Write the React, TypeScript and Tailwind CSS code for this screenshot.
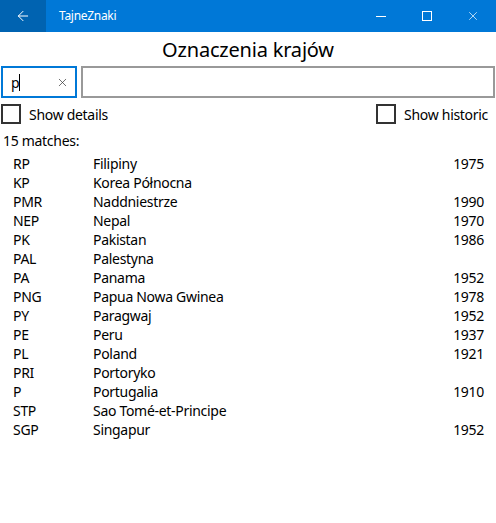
import { ArrowLeft, X } from "lucide-react";

const rows: [string, string, string][] = [
  ["RP", "Filipiny", "1975"],
  ["KP", "Korea Północna", ""],
  ["PMR", "Naddniestrze", "1990"],
  ["NEP", "Nepal", "1970"],
  ["PK", "Pakistan", "1986"],
  ["PAL", "Palestyna", ""],
  ["PA", "Panama", "1952"],
  ["PNG", "Papua Nowa Gwinea", "1978"],
  ["PY", "Paragwaj", "1952"],
  ["PE", "Peru", "1937"],
  ["PL", "Poland", "1921"],
  ["PRI", "Portoryko", ""],
  ["P", "Portugalia", "1910"],
  ["STP", "Sao Tomé-et-Principe", ""],
  ["SGP", "Singapur", "1952"],
];

const Checkbox = ({ label }: { label: string }) => (
  <label className="flex items-center gap-2">
    <span className="h-5 w-5 border-2 border-[#333]" />
    <span>{label}</span>
  </label>
);

export default function App() {
  return (
    <div className="h-[523px] w-[496px] bg-white text-[14px] tracking-[-0.3px] text-black font-['Noto_Sans',sans-serif]">
      {/* Title bar */}
      <div className="flex h-8 items-center bg-[#0078d7] text-white">
        <div className="flex h-full w-[46px] items-center justify-center bg-[#0063b1]">
          <ArrowLeft size={16} strokeWidth={1.5} />
        </div>
        <span className="ml-[13px] text-[12px]">TajneZnaki</span>
        <div className="ml-auto flex h-full">
          <div className="flex w-[46px] items-center justify-center">
            <span className="h-px w-[10px] bg-white" />
          </div>
          <div className="flex w-[46px] items-center justify-center">
            <span className="h-[10px] w-[10px] border border-white" />
          </div>
          <div className="flex w-[46px] items-center justify-center">
            <X size={14} strokeWidth={1.2} />
          </div>
        </div>
      </div>

      {/* Heading */}
      <h1 className="flex h-[34px] items-center justify-center pt-[2px] text-[20px] tracking-[-0.2px]">
        Oznaczenia krajów
      </h1>

      {/* Search inputs */}
      <div className="flex h-8 gap-1 px-px">
        <div className="flex w-[76px] items-center border-2 border-[#0078d7] pl-[8px] pr-[6px]">
          <span>p</span>
          <span className="h-[17px] w-px bg-black" />
          <X size={13} strokeWidth={1.3} className="ml-auto text-[#333]" />
        </div>
        <div className="flex-1 border-2 border-[#999]" />
      </div>

      {/* Options */}
      <div className="mt-[6px] flex h-5 items-center justify-between pl-px pr-2">
        <Checkbox label="Show details" />
        <Checkbox label="Show historic" />
      </div>

      <div className="mt-[7px] pl-[3px] leading-[19px]">15 matches:</div>

      {/* Results */}
      <div className="mt-[4px] pl-[13px] pr-[12px]">
        {rows.map(([code, name, year]) => (
          <div key={code} className="flex h-[19px] items-center">
            <span className="w-[80px]">{code}</span>
            <span className="flex-1">{name}</span>
            <span>{year}</span>
          </div>
        ))}
      </div>
    </div>
  );
}
